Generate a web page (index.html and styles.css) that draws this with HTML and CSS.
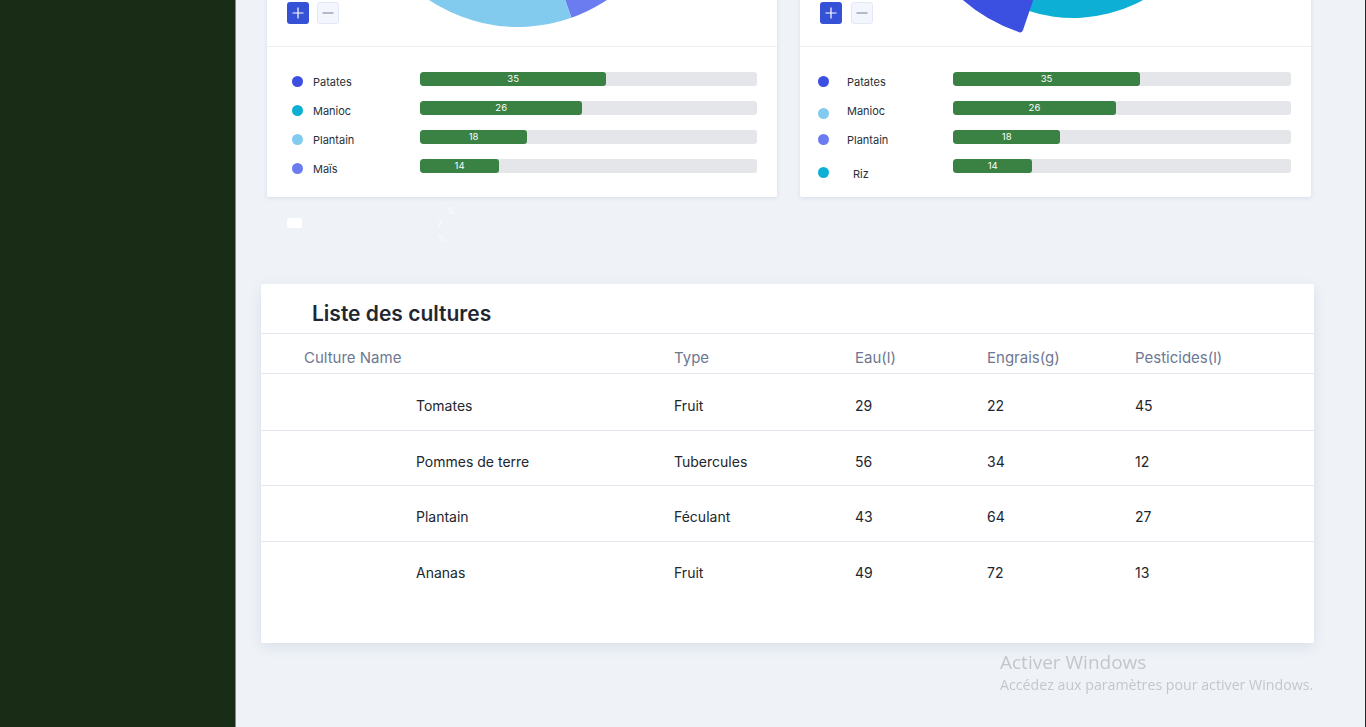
FILE: index.html
```html
<!DOCTYPE html>
<html lang="fr">
<head>
<meta charset="utf-8">
<title>Cultures</title>
<link rel="stylesheet" href="styles.css">
</head>
<body>
<div class="app">
  <aside class="sidebar"></aside>
  <main class="main">
    <div class="cards">
      <section class="card">
        <div class="chart">
          <svg class="pie" width="510" height="250" viewBox="0 0 510 250">
            <path d="M251,70 L389.6,-10 A160,160 0 0 1 304.4,220.8 Z" fill="#6a7cf0"/>
            <path d="M251,70 L304.4,220.8 A160,160 0 0 1 100.6,15.3 Z" fill="#83cbee"/>
            <path d="M251,70 L100.6,15.3 A160,160 0 0 1 251,-90 Z" fill="#0eafd4"/>
            <path d="M251,70 L251,-90 A160,160 0 0 1 389.6,-10 Z" fill="#3b4fe0"/>
          </svg>
          <div class="zoom">
            <span class="zbtn plus"><svg width="12" height="12" viewBox="0 0 12 12"><path d="M6 0.5V11.5M0.5 6H11.5" stroke="#fff" stroke-width="1.2"/></svg></span>
            <span class="zbtn minus"><svg width="12" height="12" viewBox="0 0 12 12"><path d="M0.5 6H11.5" stroke="#8a90a4" stroke-width="1.2"/></svg></span>
          </div>
        </div>
        <div class="legend">
          <div class="lrow"><span class="dot" style="background:#3b4fe0"></span><span class="lname">Patates</span><div class="track"><div class="fill" style="width:55.3%">35</div></div></div>
          <div class="lrow"><span class="dot" style="background:#0eafd4"></span><span class="lname">Manioc</span><div class="track"><div class="fill" style="width:48.2%">26</div></div></div>
          <div class="lrow"><span class="dot" style="background:#83cbee"></span><span class="lname">Plantain</span><div class="track"><div class="fill" style="width:31.8%">18</div></div></div>
          <div class="lrow"><span class="dot" style="background:#6a7cf0"></span><span class="lname">Maïs</span><div class="track"><div class="fill" style="width:23.5%">14</div></div></div>
        </div>
      </section>
      <section class="card card-b">
        <div class="chart">
          <svg class="pie" width="511" height="250" viewBox="0 0 511 250">
            <path d="M273,76 L108.6,90.4 A165,165 0 0 1 247.8,-66.8 Z" fill="#83cbee"/>
            <path d="M273,76 L247.8,-66.8 A145,145 0 0 1 409.3,125.6 Z" fill="#6a7cf0"/>
            <path d="M273,76 L409.3,125.6 A145,145 0 0 1 226.5,213.3 Z" fill="#0eafd4"/>
            <path d="M273,76 L220.1,232.3 A165,165 0 0 1 108.6,90.4 Z" fill="#3b4fe0" stroke="#3b4fe0" stroke-width="6" stroke-linejoin="round"/>
          </svg>
          <div class="zoom">
            <span class="zbtn plus"><svg width="12" height="12" viewBox="0 0 12 12"><path d="M6 0.5V11.5M0.5 6H11.5" stroke="#fff" stroke-width="1.2"/></svg></span>
            <span class="zbtn minus"><svg width="12" height="12" viewBox="0 0 12 12"><path d="M0.5 6H11.5" stroke="#8a90a4" stroke-width="1.2"/></svg></span>
          </div>
        </div>
        <div class="legend">
          <div class="lrow"><span class="dot" style="background:#3b4fe0"></span><span class="lname">Patates</span><div class="track"><div class="fill" style="width:55.3%">35</div></div></div>
          <div class="lrow"><span class="dot low" style="background:#83cbee"></span><span class="lname">Manioc</span><div class="track"><div class="fill" style="width:48.2%">26</div></div></div>
          <div class="lrow"><span class="dot" style="background:#6a7cf0"></span><span class="lname">Plantain</span><div class="track"><div class="fill" style="width:31.8%">18</div></div></div>
          <div class="lrow"><span class="dot lower" style="background:#0eafd4"></span><span class="lname riz">Riz</span><div class="track"><div class="fill" style="width:23.5%">14</div></div></div>
        </div>
      </section>
    </div>
    <div class="extras">
      <span class="chip"></span>
      <span class="ghost"><span class="g1">%</span><span class="g2">7</span><span class="g3">%</span></span>
    </div>
    <section class="table-card">
      <h2 class="tc-title">Liste des cultures</h2>
      <div class="trow thead">
        <span>Culture Name</span><span>Type</span><span>Eau(l)</span><span>Engrais(g)</span><span>Pesticides(l)</span>
      </div>
      <div class="trow first">
        <span class="cname">Tomates</span><span>Fruit</span><span>29</span><span>22</span><span>45</span>
      </div>
      <div class="trow">
        <span class="cname">Pommes de terre</span><span>Tubercules</span><span>56</span><span>34</span><span>12</span>
      </div>
      <div class="trow mid">
        <span class="cname">Plantain</span><span>Féculant</span><span>43</span><span>64</span><span>27</span>
      </div>
      <div class="trow last">
        <span class="cname">Ananas</span><span>Fruit</span><span>49</span><span>72</span><span>13</span>
      </div>
    </section>
  </main>
</div>
<div class="watermark">
  <div class="wm1">Activer Windows</div>
  <div class="wm2">Accédez aux paramètres pour activer Windows.</div>
</div>
</body>
</html>
```
FILE: styles.css
```css
* { box-sizing: border-box; margin: 0; padding: 0; }
html, body { height: 100%; }
body {
  font-family: Inter, "Noto Sans", "Liberation Sans", sans-serif;
  background: #eff3f8;
  overflow: hidden;
}
.app {
  display: flex;
  height: 727px;
  border-right: 1px solid #2a2a2a;
}
.sidebar {
  width: 236px;
  flex: none;
  background: #192c16;
  border-right: 1px solid #7d8f7b;
}
.main {
  flex: 1;
  padding: 0 50px 0 25px;
  background: #eff3f8;
}
.cards {
  display: flex;
  gap: 23px;
  margin-top: -203px;
  padding: 0 3px 0 6px;
}
.card {
  width: 510px;
  height: 400px;
  background: #fff;
  box-shadow: 0 1px 4px rgba(40, 60, 90, 0.12);
  border-radius: 2px;
  display: flex;
  flex-direction: column;
}
.card-b { width: 511px; }
.chart {
  position: relative;
  height: 250px;
  border-bottom: 1px solid #eceff4;
  overflow: hidden;
}
.pie { display: block; }
.zoom {
  position: absolute;
  left: 20px;
  bottom: 22px;
  display: flex;
  gap: 8px;
}
.card-b .zoom { gap: 9px; }
.zbtn {
  width: 22px;
  height: 22px;
  border-radius: 3px;
  display: flex;
  align-items: center;
  justify-content: center;
}
.plus { background: #3552d6; }
.minus { background: #f4f6fe; border: 1px solid #e4e8f6; }
.legend {
  padding: 25px 20px 0 25px;
  display: flex;
  flex-direction: column;
}
.card-b .legend { padding-left: 18px; }
.lrow {
  display: flex;
  align-items: flex-start;
  height: 29px;
}
.dot {
  width: 11px;
  height: 11px;
  border-radius: 50%;
  margin-top: 4px;
  flex: none;
}
.dot.low { margin-top: 7px; }
.dot.lower { margin-top: 8px; }
.lname {
  width: 117px;
  padding-left: 10px;
  padding-top: 1px;
  font-size: 11px;
  line-height: 18px;
  color: #2a2f38;
  flex: none;
}
.card-b .lname { width: 124px; padding-left: 18px; }
.card-b .lname.riz { padding-left: 24px; padding-top: 6px; }
.track {
  flex: 1;
  height: 14px;
  background: #e5e6ea;
  border-radius: 3px;
  overflow: hidden;
}
.fill {
  height: 100%;
  background: #3a8244;
  border-radius: 3px;
  color: #fff;
  font-size: 9.5px;
  line-height: 14px;
  text-align: center;
}
.extras {
  height: 87px;
  display: flex;
  padding: 21px 0 0 26px;
}
.chip {
  width: 15px;
  height: 10px;
  background: #fff;
  border-radius: 2px;
}
.ghost {
  margin-left: 135px;
  margin-top: -14px;
  display: flex;
  flex-direction: column;
  color: #fbfcfe;
  font-size: 9px;
  line-height: 14px;
}
.g1 { padding-left: 9px; }
.g3 { padding-left: 1px; }
.table-card {
  background: #fff;
  width: 1053px;
  height: 359px;
  border-radius: 2px;
  box-shadow: 0 4px 14px rgba(40, 60, 90, 0.10);
}
.tc-title {
  height: 50px;
  padding: 16px 0 0 51px;
  font-size: 21px;
  font-weight: 600;
  color: #1f2733;
  line-height: 28px;
  border-bottom: 1px solid #e3e8ef;
}
.trow {
  display: grid;
  grid-template-columns: 370px 181px 132px 148px 1fr;
  padding-left: 43px;
  height: 55px;
  padding-top: 22px;
  font-size: 14px;
  line-height: 17px;
  color: #22262d;
  border-bottom: 1px solid #e3e8ef;
}
.trow.thead {
  height: 40px;
  padding-top: 15px;
  font-size: 15px;
  color: #6c7892;
}
.trow.first { height: 57px; padding-top: 23px; }
.trow.mid { height: 56px; padding-top: 22px; }
.trow.last { border-bottom: none; }
.cname { padding-left: 112px; }
.watermark {
  position: fixed;
  left: 1000px;
  top: 649px;
  font-family: "Open Sans", "Noto Sans", sans-serif;
  color: #c3c7cc;
}
.wm1 { font-size: 19px; line-height: 26px; }
.wm2 { font-size: 14.2px; line-height: 20px; }
```
